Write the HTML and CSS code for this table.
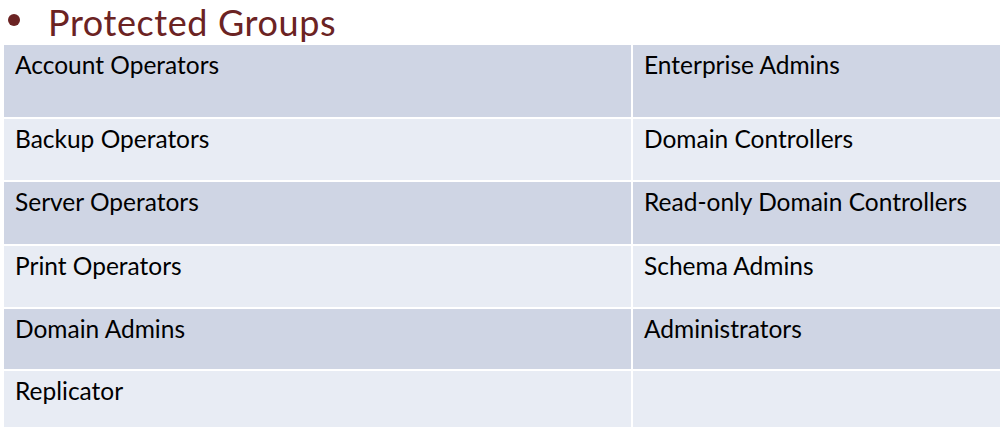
FILE: index.html
```html
<!DOCTYPE html>
<html>
<head>
<meta charset="utf-8">
<link rel="stylesheet" href="styles.css">
</head>
<body>
<div class="title"><span class="bullet"></span><span class="title-text">Protected Groups</span></div>
<div class="table">
  <div class="cell dark">Account Operators</div>
  <div class="cell dark">Enterprise Admins</div>
  <div class="cell light">Backup Operators</div>
  <div class="cell light">Domain Controllers</div>
  <div class="cell dark">Server Operators</div>
  <div class="cell dark">Read-only Domain Controllers</div>
  <div class="cell light">Print Operators</div>
  <div class="cell light">Schema Admins</div>
  <div class="cell dark">Domain Admins</div>
  <div class="cell dark">Administrators</div>
  <div class="cell light">Replicator</div>
  <div class="cell light"></div>
</div>
</body>
</html>
```
FILE: styles.css
```css
html, body {
  margin: 0;
  padding: 0;
  background: #ffffff;
}
body {
  font-family: Lato, "Open Sans", sans-serif;
  overflow: hidden;
}
.title {
  display: flex;
  align-items: flex-start;
  height: 45px;
  color: #6b2323;
}
.bullet {
  flex: none;
  width: 12px;
  height: 12px;
  border-radius: 50%;
  background: #6b2323;
  margin: 14px 28px 0 8px;
}
.title-text {
  font-size: 36px;
  line-height: 44px;
  letter-spacing: 0.6px;
}
.table {
  display: grid;
  grid-template-columns: 627px 1fr;
  grid-template-rows: 72px 61px 62px 61px 60px 60px;
  gap: 2px;
  margin-left: 4px;
}
.cell {
  font-size: 24.5px;
  color: #000;
  padding: 6px 0 0 11px;
  line-height: 28px;
}
.dark { background: #cfd5e4; }
.light { background: #e8ecf4; }
```
